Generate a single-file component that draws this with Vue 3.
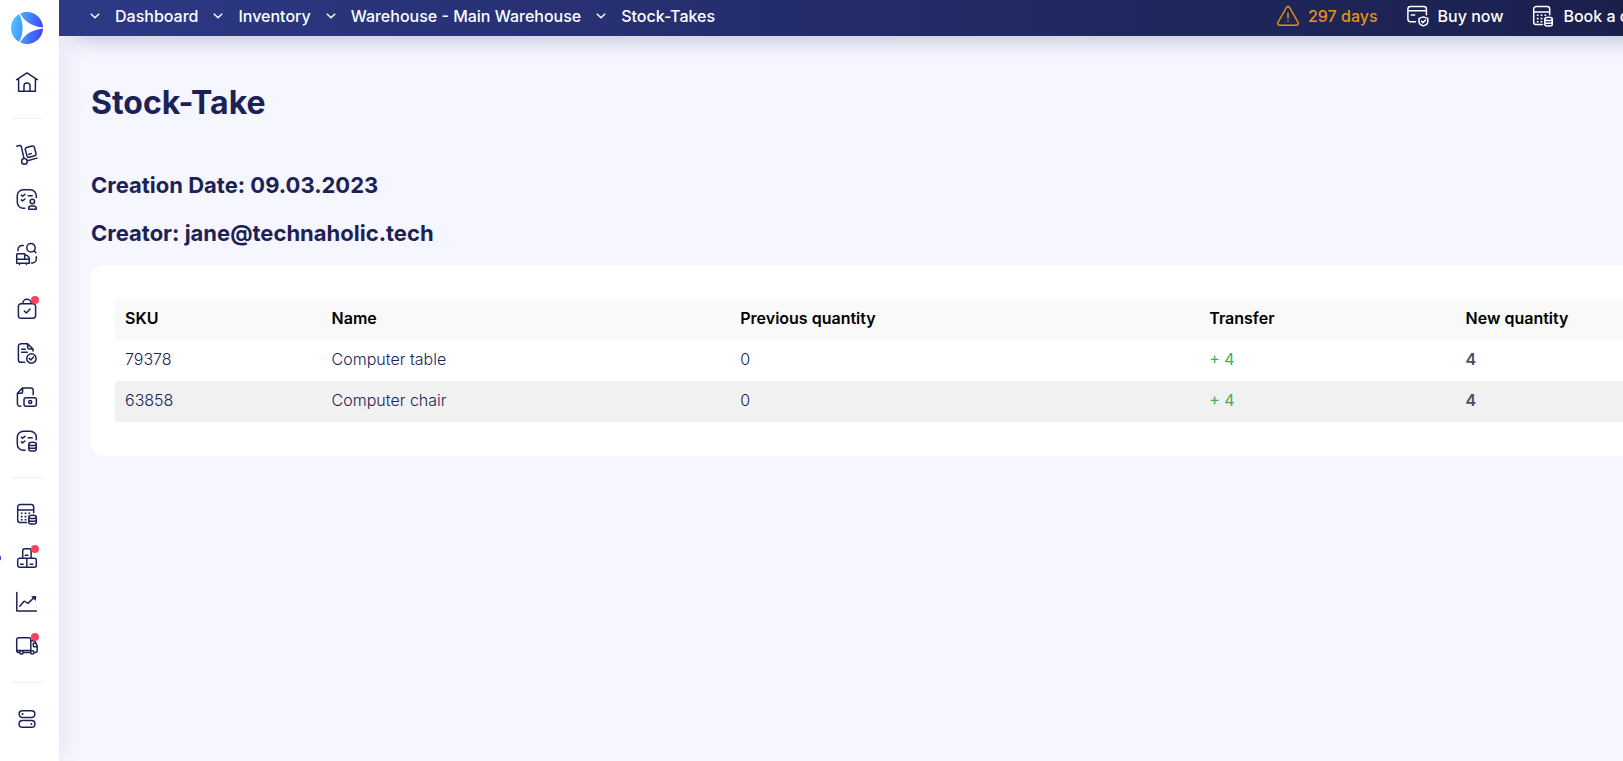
<script setup>
// Circle expressed as path data
const ring = (x, y, r) => `M${x - r} ${y}a${r} ${r} 0 1 0 ${2 * r} 0a${r} ${r} 0 1 0 ${-2 * r} 0z`

const database =
  'M13.8 15c0-1 1.7-1.7 3.8-1.7s3.7.7 3.7 1.7-1.7 1.6-3.7 1.6-3.8-.6-3.8-1.6zM13.8 15v5.4c0 1 1.7 1.6 3.8 1.6s3.7-.6 3.7-1.6V15M13.8 17.7c0 1 1.7 1.6 3.8 1.6s3.7-.6 3.7-1.6'
const calculator = {
  line:
    'M11.5 20.6H5.3a2.6 2.6 0 0 1-2.6-2.6V5a2.6 2.6 0 0 1 2.6-2.6h10.8A2.6 2.6 0 0 1 18.7 5v5.8M2.7 8h16' + database,
  dots: 'M5.8 10.4h1.8v1.6H5.8zM9.6 10.4h1.8v1.6H9.6zM13.4 10.4h1.8v1.6h-1.8zM5.8 13.8h1.8v1.6H5.8zM9.6 13.8h1.8v1.6H9.6zM5.8 17h1.8v1.6H5.8zM9.6 17h1.8v1.6H9.6z',
}
const checks = 'M6.3 8.2l1.2 1L10 7.3M6.3 12.9l1.2 1L10 12M13.2 8.8h4'

const menu = [
  {
    label: 'Home',
    line: 'M1.7 9.6L12 2.9l10.3 6.7M3.6 8.6v12.6h16.8V8.6M9 21.2v-5.6a2.6 2.6 0 0 1 2.6-2.6h.8a2.6 2.6 0 0 1 2.6 2.6v5.6',
  },
  { divider: true },
  {
    label: 'Deliveries',
    line:
      'M1.8 3.2l2.6-.6a1.6 1.6 0 0 1 2 1.2l2.6 11.7M12.4 17.8L22 15.1M11.6 4.5l5.5-1.5a1.8 1.8 0 0 1 2.2 1.3l1.7 6.2a1.8 1.8 0 0 1-1.3 2.2l-5.5 1.5a1.8 1.8 0 0 1-2.2-1.3l-1.7-6.2a1.8 1.8 0 0 1 1.3-2.2zM13.8 11.3l2.4-.7' +
      ring(9.4, 18.4, 2.8),
  },
  {
    label: 'Customers',
    line:
      'M9.8 21.3H8.3a6 6 0 0 1-6-6V8.7a6 6 0 0 1 6-6h7a6 6 0 0 1 6 6v1.8M13.7 22.3v-.9a2.3 2.3 0 0 1 2.3-2.3h3a2.3 2.3 0 0 1 2.3 2.3v.9z' +
      checks + ring(17.4, 14.5, 2.2),
  },
  {
    label: 'Suppliers',
    wide: true,
    line:
      'M3 8.8V7.5a4 4 0 0 1 4-4h1.3M21.3 14.8V17a4 4 0 0 1-4 4h-.8M19 8.8l1.8 1.8M2.8 11.8h6.9v5.5H1.7v-4.4a1.1 1.1 0 0 1 1.1-1.1zM1.7 17.3v3.9h12.6v-3.9H9.7M9.7 13.2h2.2l2.4 2.6v1.5M4.5 21.4v1M11.5 21.4v1' +
      ring(16, 5.8, 4.2),
  },
  {
    label: 'Orders',
    badge: true,
    line:
      'M6 6.8h12a2.6 2.6 0 0 1 2.6 2.6v9.2a2.6 2.6 0 0 1-2.6 2.6H6a2.6 2.6 0 0 1-2.6-2.6V9.4A2.6 2.6 0 0 1 6 6.8zM7.8 6.5a4.2 4.2 0 0 1 8.4 0M9.3 14l2 2 3.8-3.9',
  },
  {
    label: 'Invoices',
    line:
      'M9.7 21.3H6a2.6 2.6 0 0 1-2.6-2.6V5.3A2.6 2.6 0 0 1 6 2.7h6.6l5.4 5.4v1.8M12.6 2.9v3.3a1.9 1.9 0 0 0 1.9 1.9h3.3M6.7 8.2h3.5M6.7 11.2h5.600M14.2 17.4l1.6 1.5 2.7-2.8' +
      ring(16.4, 17.5, 4.7),
  },
  {
    label: 'Payments',
    line:
      'M5.8 21.2H5a2.6 2.6 0 0 1-2.6-2.6V8.2l5.2-5.3h8a2.6 2.6 0 0 1 2.6 2.6V9.8M7.6 3.1v3.3a1.8 1.8 0 0 1-1.8 1.8H2.6M11 12.8h8.4a2 2 0 0 1 2 2v4.500a2 2 0 0 1-2 2H11a2 2 0 0 1-2-2v-4.500a2 2 0 0 1 2-2z' +
      ring(15.2, 17, 1.5),
  },
  {
    label: 'Price lists',
    line:
      'M10 21.3H8.3a6 6 0 0 1-6-6V8.2a6 6 0 0 1 6-6h7a6 6 0 0 1 6 6v2.6' + checks + database,
  },
  { divider: true },
  { label: 'Accounting', ...calculator },
  {
    label: 'Inventory',
    badge: true,
    current: true,
    line:
      'M9.6 2.8h4.6a1.9 1.9 0 0 1 1.9 1.9v7.5H7.7V4.7a1.9 1.9 0 0 1 1.9-1.9zM4.6 12.2h7.2v9H4.6a1.9 1.9 0 0 1-1.9-1.9v-5.2a1.9 1.9 0 0 1 1.9-1.9zM11.8 12.2h7.6a1.9 1.9 0 0 1 1.9 1.9v5.2a1.9 1.9 0 0 1-1.9 1.9h-7.6M10.3 9.3h2.6M5.6 18.2h2.6M15.2 18.2h2.6',
  },
  {
    label: 'Reports',
    line: 'M1.8 2.5V21h19.5M4.8 16.3l4-4.7a1 1 0 0 1 1.4-.1l1.9 1.5a1 1 0 0 0 1.3-.1l6-5.6',
    dots: 'M16 6.3l5.2-.2-.5 5z',
  },
  {
    label: 'Shipping',
    badge: true,
    line:
      'M4.5 18.4h-.8a2 2 0 0 1-2-2V5.6a1.9 1.9 0 0 1 1.9-1.9h10.3a1.9 1.9 0 0 1 1.9 1.9v10.8H1.9M8.2 18.4h7.2M15.8 6.8h2.7a2 2 0 0 1 1.8 1.1l1.9 3.9v4.6a2 2 0 0 1-2 2h-1M21.7 12.7h-2.4a1 1 0 0 1-1-1V9.2h2.7' +
      ring(6.4, 18.4, 1.7) + ring(17.3, 18.4, 1.7),
  },
  { divider: true },
  {
    label: 'Settings',
    line:
      'M7.4 3.8h9.2a3.3 3.3 0 0 1 0 6.6H7.4a3.3 3.3 0 0 1 0-6.6zM7.4 13.6h9.2a3.3 3.3 0 0 1 0 6.6H7.4a3.3 3.3 0 0 1 0-6.6z',
    dots: ring(7.6, 7.1, 1) + ring(16.4, 16.9, 1),
  },
]

const crumbs = ['Dashboard', 'Inventory', 'Warehouse - Main Warehouse', 'Stock-Takes']

const actions = [
  {
    label: '297 days',
    warning: true,
    line: 'M10.4 3.5a1.9 1.9 0 0 1 3.2 0l8.5 15a1.9 1.9 0 0 1-1.7 2.8H3.6a1.9 1.9 0 0 1-1.7-2.8zM12 9v5',
    dots: ring(12, 17, 0.8),
  },
  {
    label: 'Buy now',
    line:
      'M9.5 17.7H4.5a2.6 2.6 0 0 1-2.6-2.6V5.1a2.6 2.6 0 0 1 2.6-2.6h13.3a2.6 2.6 0 0 1 2.6 2.6v5.6M1.9 6.8h18.5M5.3 11h3.4M17.4 12.9l4.4 1.5v3c0 2.1-1.8 3.7-4.4 4.5-2.6-.8-4.4-2.4-4.4-4.5v-3zM15.5 17.3l1.4 1.3 2.5-2.5',
  },
  { label: 'Book a demo', ...calculator },
]

const columns = [
  { key: 'sku', label: 'SKU' },
  { key: 'name', label: 'Name' },
  { key: 'previous', label: 'Previous quantity' },
  { key: 'transfer', label: 'Transfer' },
  { key: 'next', label: 'New quantity' },
]
const rows = [
  { sku: '79378', name: 'Computer table', previous: '0', transfer: '+ 4', next: '4' },
  { sku: '63858', name: 'Computer chair', previous: '0', transfer: '+ 4', next: '4' },
]
</script>

<template>
  <div class="shell">
    <aside class="sidebar">
      <a class="logo" href="#" aria-label="Start">
        <svg viewBox="0 0 32 32" aria-hidden="true">
          <defs>
            <linearGradient id="logo-fill" x1="0" y1="0.4" x2="1" y2="0.6">
              <stop offset="0" stop-color="#4cc4ff" />
              <stop offset="0.5" stop-color="#4588fb" />
              <stop offset="1" stop-color="#4340f5" />
            </linearGradient>
          </defs>
          <circle cx="16" cy="16" r="16" fill="url(#logo-fill)" />
          <path d="M7.6 .8L9.2 1.2Q15 13.5 32 15.5V16.5Q15 18.5 9.2 30.8L7.6 31.2Q15.6 16 7.6 .8z" fill="#fff" />
        </svg>
      </a>
      <nav aria-label="Main">
        <ul class="menu">
          <li
            v-for="(item, i) in menu"
            :key="i"
            :class="{ divider: item.divider, wide: item.wide, current: item.current }"
          >
            <a v-if="!item.divider" class="menu-link" href="#" :aria-label="item.label">
              <svg class="icon" viewBox="0 0 24 24" aria-hidden="true">
                <path class="line" :d="item.line" />
                <path v-if="item.dots" class="dots" :d="item.dots" />
              </svg>
              <span v-if="item.badge" class="badge"></span>
            </a>
          </li>
        </ul>
      </nav>
    </aside>

    <div class="page">
      <header class="topbar">
        <nav class="crumbs" aria-label="Breadcrumb">
          <a v-for="crumb in crumbs" :key="crumb" class="crumb" href="#">
            <svg class="chevron" viewBox="0 0 10 6" aria-hidden="true"><path d="M.8.8L5 4.8 9.2.8" /></svg>
            {{ crumb }}
          </a>
        </nav>
        <div class="actions">
          <a
            v-for="action in actions"
            :key="action.label"
            class="action"
            :class="{ warning: action.warning }"
            href="#"
          >
            <svg class="icon" viewBox="0 0 24 24" aria-hidden="true">
              <path class="line" :d="action.line" />
              <path v-if="action.dots" class="dots" :d="action.dots" />
            </svg>
            {{ action.label }}
          </a>
        </div>
      </header>

      <main class="content">
        <h1>Stock-Take</h1>
        <h2>Creation Date: 09.03.2023</h2>
        <h2>Creator: jane@technaholic.tech</h2>
        <section class="card">
          <table>
            <thead>
              <tr>
                <th v-for="col in columns" :key="col.key" :class="'col-' + col.key" scope="col">{{ col.label }}</th>
              </tr>
            </thead>
            <tbody>
              <tr v-for="row in rows" :key="row.sku">
                <td v-for="col in columns" :key="col.key" :class="'cell-' + col.key">{{ row[col.key] }}</td>
              </tr>
            </tbody>
          </table>
        </section>
      </main>
    </div>
  </div>
</template>

<style>
body {
  margin: 0;
  background: #f5f6ff;
}
</style>

<style scoped>
.shell {
  display: flex;
  min-height: 100vh;
  overflow: hidden;
  font-family: Inter, "Liberation Sans", sans-serif;
  font-size: 16px;
  color: #1d2256;
}
a {
  color: inherit;
  text-decoration: none;
}
.icon {
  width: 24px;
  height: 24px;
  flex: none;
}
.line {
  fill: none;
  stroke: currentColor;
  stroke-width: 1.5;
  stroke-linecap: round;
  stroke-linejoin: round;
}
.dots {
  fill: currentColor;
}

.sidebar {
  box-sizing: border-box;
  flex: none;
  width: 59px;
  padding-top: 12px;
  background: #fff;
  box-shadow: 0 0 28px rgba(29, 34, 86, 0.1);
}
.logo {
  display: block;
  width: 32px;
  height: 32px;
  margin: 0 0 16px 11px;
}
.logo svg {
  display: block;
}
.menu {
  margin: 0;
  padding: 0;
  list-style: none;
}
.menu-link {
  position: relative;
  display: flex;
  align-items: center;
  height: 44px;
  padding-left: 15px;
}
.wide {
  padding: 11px 0;
}
.divider {
  width: 32px;
  height: 1px;
  margin: 14px 0 14px 11px;
  background: #f1f1f6;
}
.badge {
  position: absolute;
  top: 9px;
  left: 31px;
  width: 8px;
  height: 8px;
  border-radius: 50%;
  background: #fb4259;
}
.current {
  position: relative;
}
.current::before {
  content: "";
  position: absolute;
  top: 19px;
  left: -5px;
  width: 6px;
  height: 6px;
  border-radius: 50%;
  background: #2a1fe0;
}

.page {
  flex: 1;
  min-width: 0;
}
.topbar {
  position: relative;
  display: flex;
  justify-content: space-between;
  margin-right: -40px;
  padding: 0 0 4px 31px;
  background: linear-gradient(90deg, #2d3986, #1a1f4b);
  box-shadow: 16px 4px 20px rgba(29, 34, 86, 0.24);
  color: #fff;
  font-weight: 500;
  line-height: 32px;
  white-space: nowrap;
}
.crumbs,
.actions {
  display: flex;
}
.crumbs {
  gap: 15px;
}
.crumb {
  display: flex;
  align-items: center;
  gap: 15px;
}
.chevron {
  width: 10px;
  height: 6px;
  fill: none;
  stroke: currentColor;
  stroke-width: 1.5;
}
.actions {
  gap: 28px;
}
.action {
  display: flex;
  align-items: center;
  gap: 8px;
}
.warning {
  color: #e8920f;
}

.content {
  padding: 45px 0 44px 32px;
}
h1,
h2 {
  margin: 0;
  font-weight: 700;
}
h1 {
  margin-bottom: 36px;
  font-size: 32px;
  line-height: 44px;
}
h2 {
  font-size: 22px;
  line-height: 48px;
}
.card {
  margin-top: 8px;
  padding: 34px 0 34px 24px;
  border-radius: 12px 0 0 12px;
  background: #fff;
}
table {
  width: 100%;
  border-collapse: collapse;
  table-layout: fixed;
}
th,
td {
  box-sizing: border-box;
  height: 41px;
  padding: 0 10px 4px;
  text-align: left;
  line-height: 20px;
}
th {
  background: #f9f9f9;
  color: #000;
  font-weight: 600;
}
td {
  font-weight: 300;
}
tbody tr:nth-child(even) {
  background: #f1f1f1;
}
.col-sku {
  width: 13.7%;
}
.col-name {
  width: 27.1%;
}
.col-previous {
  width: 31.1%;
}
.col-transfer {
  width: 17%;
}
.cell-transfer {
  color: #41b05a;
  font-weight: 400;
}
.cell-next {
  color: #4b4d66;
  font-weight: 600;
}
</style>
